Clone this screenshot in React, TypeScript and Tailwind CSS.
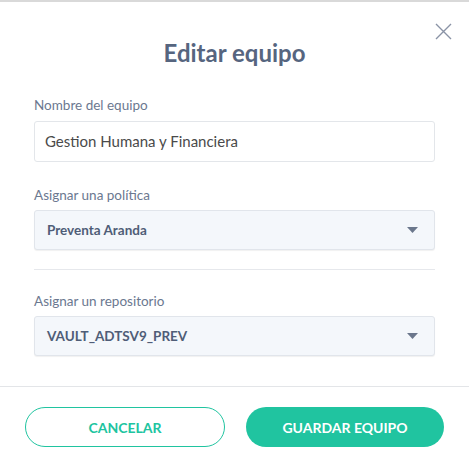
// Edit team modal
export default function App() {
  return (
    <div
      className="relative w-[469px] h-[467px] bg-white border-t-2 border-[#d9d9d9]"
      style={{ fontFamily: "Lato, 'Noto Sans', sans-serif" }}
    >
      {/* Close button */}
      <button className="absolute top-[21px] right-[17px] text-[#8a93a6]" aria-label="Cerrar">
        <svg width="17" height="17" viewBox="0 0 17 17" fill="none" stroke="currentColor" strokeWidth="1.4">
          <path d="M1 1L16 16M16 1L1 16" />
        </svg>
      </button>
      {/* Title */}
      <h2 className="pt-[36px] text-center text-[24px] leading-[30px] font-bold text-[#56657f]">
        Editar equipo
      </h2>
      {/* Form */}
      <div className="px-[34px] pt-[27px] flex flex-col">
        <label className="text-[13.5px] leading-[20px] text-[#6b7890]">Nombre del equipo</label>
        <div className="mt-[6px] h-[41px] flex items-center px-[10px] rounded-[3px] border border-[#e3e6ea] bg-white text-[15px] text-[#4a4a4a]">
          Gestion Humana y Financiera
        </div>
        <label className="mt-[23px] text-[13.5px] leading-[20px] text-[#6b7890]">Asignar una política</label>
        <div className="mt-[5px] h-[40px] flex items-center justify-between pl-[12px] pr-[16px] rounded-[3px] border border-[#e1e5eb] bg-[#f4f7fb] shadow-[0_1px_1px_rgba(0,0,0,0.06)]">
          <span className="text-[13.5px] font-bold text-[#4f5d77]">Preventa Aranda</span>
          <Caret />
        </div>
        <div className="mt-[19px] h-px bg-[#e6e8ec]" />
        <label className="mt-[21px] text-[13.5px] leading-[20px] text-[#6b7890]">Asignar un repositorio</label>
        <div className="mt-[5px] h-[40px] flex items-center justify-between pl-[12px] pr-[16px] rounded-[3px] border border-[#e1e5eb] bg-[#f4f7fb] shadow-[0_1px_1px_rgba(0,0,0,0.06)]">
          <span className="text-[13.5px] font-bold text-[#4f5d77]">VAULT_ADTSV9_PREV</span>
          <Caret />
        </div>
      </div>
      {/* Footer */}
      <div className="mt-[30px] border-t border-[#e3e5e8] pt-[20px] px-[25px] flex gap-[21px]">
        <button className="flex-1 h-[40px] rounded-full border border-[#20c4a0] bg-white text-[14px] font-bold text-[#20c4a0]">
          CANCELAR
        </button>
        <button className="flex-1 h-[40px] rounded-full bg-[#20c4a0] text-[14px] font-bold text-white">
          GUARDAR EQUIPO
        </button>
      </div>
    </div>
  );
}

function Caret() {
  return (
    <svg width="11" height="6" viewBox="0 0 11 6" className="text-[#6b778c]">
      <path d="M0 0H11L5.5 6Z" fill="currentColor" />
    </svg>
  );
}
